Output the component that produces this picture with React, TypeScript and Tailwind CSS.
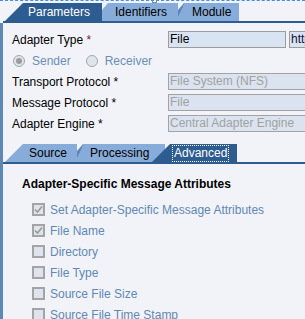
import { ReactNode } from "react";

/* ─── Tabs ─── */
function ActiveTab({ label, width, pad, focus }: { label: string; width: string; pad: string; focus?: boolean }) {
	return (
		<div
			className={`relative z-10 h-[18px] ${width} ${pad} bg-[#2d5c90] text-white leading-[18px] [clip-path:polygon(0_100%,18px_0,100%_0,100%_100%)]`}
		>
			{focus ? (
				<span className="inline-block border border-dotted border-white px-[1px] leading-[15px]">{label}</span>
			) : (
				label
			)}
		</div>
	);
}

function Tab({
	label,
	width,
	pad,
	shade,
	first,
}: {
	label: string;
	width: string;
	pad: string;
	shade?: boolean;
	first?: boolean;
}) {
	const clip = first
		? "[clip-path:polygon(0_100%,18px_0,100%_0,100%_100%)]"
		: "[clip-path:polygon(0_100%,0_7px,6px_0,100%_0,100%_100%)]";
	const bg = shade
		? "bg-[linear-gradient(115deg,#5f87b9_0,#5f87b9_6px,#88acd9_6px)]"
		: "bg-[#88acd9]";
	return <div className={`h-[18px] ${width} ${pad} ${bg} ${clip} text-black leading-[18px]`}>{label}</div>;
}

/* ─── Form bits ─── */
function Row({ label, req = "text-black", children }: { label: string; req?: string; children: ReactNode }) {
	return (
		<div className="flex h-[17px] items-center">
			<div className="w-[156px] shrink-0 whitespace-nowrap">
				{label} <span className={req}>*</span>
			</div>
			{children}
		</div>
	);
}

function Disabled({ value }: { value: string }) {
	return (
		<div className="h-[17px] w-[160px] shrink-0 overflow-hidden whitespace-nowrap border border-[#a3a3a3] bg-[#dae3ef] pl-[1px] leading-[15px] text-[#a2a2a2]">
			{value}
		</div>
	);
}

function Radio({ label, on }: { label: string; on?: boolean }) {
	return (
		<div className="flex items-center">
			<span className="flex h-[12px] w-[12px] items-center justify-center rounded-full border border-[#a6a6a6] bg-[#dfe5ed]">
				{on && <span className="h-[6px] w-[6px] rounded-full bg-[#9c9c9c]" />}
			</span>
			<span className="ml-[7px] text-[#6a8fb6]">{label}</span>
		</div>
	);
}

function Check({ label, on }: { label: string; on?: boolean }) {
	return (
		<div className="flex h-[21px] items-center">
			<span className="flex h-[13px] w-[13px] items-center justify-center border-2 border-[#a4a4a4] bg-[#dde4ed]">
				{on && (
					<svg width="9" height="9" viewBox="0 0 9 9">
						<path d="M1 4.5 L3.5 7 L8 1.5" fill="none" stroke="#9a9a9a" strokeWidth="1.6" />
					</svg>
				)}
			</span>
			<span className="ml-[5px] whitespace-nowrap text-[#5f88b4]">{label}</span>
		</div>
	);
}

export default function App() {
	return (
		<div className="relative flex h-[319px] w-[305px] flex-col overflow-hidden border-t border-dashed border-[#3d8ce6] bg-[#f1f3f8] font-['Liberation_Sans',Arial,sans-serif] text-[12px]">
			{/* selection handle */}
			<span className="absolute left-[152px] top-[-3px] h-[5px] w-[5px] border border-[#8a8a8a] bg-white" />

			{/* top tabs */}
			<div className="ml-[3px] flex h-[22px] shrink-0 items-end border-b-2 border-[#2d5c90] pl-[2px]">
				<ActiveTab label="Parameters" width="w-[97px]" pad="pl-[23px]" />
				<Tab label="Identifiers" width="w-[76px]" pad="pl-[13px]" />
				<Tab label="Module" width="w-[61px]" pad="pl-[14px]" shade />
			</div>

			{/* panel */}
			<div className="flex-1 border-l-[3px] border-[#5d88b6] pl-[9px] pt-[8px]">
				<div className="flex flex-col gap-[4px]">
					<Row label="Adapter Type" req="text-[#8a1538]">
						<div className="h-[17px] w-[118px] shrink-0 border border-[#9c9c9c] bg-[#d9e4f2] pl-[1px] leading-[15px] text-black">
							File
						</div>
						<div className="ml-[3px] h-[17px] w-[120px] shrink-0 overflow-hidden whitespace-nowrap border border-[#9c9c9c] bg-[#d9e4f2] pl-[1px] leading-[15px] text-[#10103a]">
							http://sap.com/xi/XI/System
						</div>
					</Row>
					<div className="flex h-[17px] items-center gap-[15px] pl-[1px]">
						<Radio label="Sender" on />
						<Radio label="Receiver" />
					</div>
					<Row label="Transport Protocol">
						<Disabled value="File System (NFS)" />
					</Row>
					<Row label="Message Protocol">
						<Disabled value="File" />
					</Row>
					<Row label="Adapter Engine">
						<Disabled value="Central Adapter Engine" />
					</Row>
				</div>

				{/* sub tabs */}
				<div className="-ml-[9px] mt-[12px] flex h-[20px] items-end border-b-2 border-[#2d5c90] pl-[2px]">
					<Tab label="Source" width="w-[72px]" pad="pl-[24px]" first />
					<Tab label="Processing" width="w-[88px]" pad="pl-[13px]" shade />
					<div className="-ml-[13px]">
						<ActiveTab label="Advanced" width="w-[85px]" pad="pl-[20px]" focus />
					</div>
				</div>

				<div className="ml-[10px] mt-[13px] font-bold leading-[14px] text-black">
					Adapter-Specific Message Attributes
				</div>

				<div className="ml-[20px] mt-[8px] flex flex-col">
					<Check label="Set Adapter-Specific Message Attributes" on />
					<Check label="File Name" on />
					<Check label="Directory" />
					<Check label="File Type" />
					<Check label="Source File Size" />
					<Check label="Source File Time Stamp" />
				</div>
			</div>
		</div>
	);
}
